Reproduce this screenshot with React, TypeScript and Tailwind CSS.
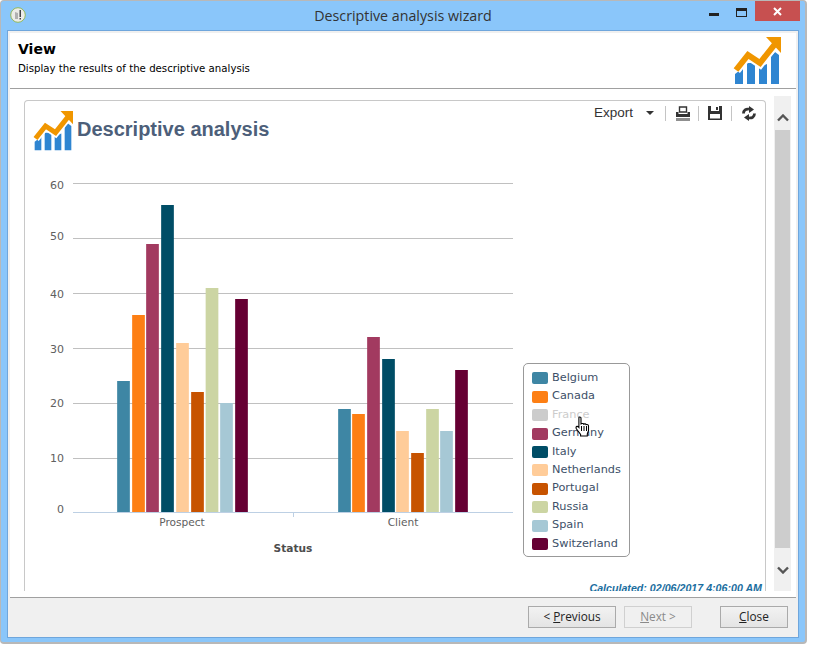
import React from "react";

const series = [
  { name: "Belgium", color: "#3e86a4", p: 24, c: 19 },
  { name: "Canada", color: "#fd7f14", p: 36, c: 18 },
  { name: "France", color: "#cccccc", p: null, c: null },
  { name: "Germany", color: "#a23a60", p: 49, c: 32 },
  { name: "Italy", color: "#004d66", p: 56, c: 28 },
  { name: "Netherlands", color: "#ffcc99", p: 31, c: 15 },
  { name: "Portugal", color: "#c75300", p: 22, c: 11 },
  { name: "Russia", color: "#ccd5a3", p: 41, c: 19 },
  { name: "Spain", color: "#a6c8d5", p: 20, c: 15 },
  { name: "Switzerland", color: "#660033", p: 39, c: 26 },
];
const visible = series.filter((s) => s.p !== null);
const px = [117, 132, 146, 161, 176, 191, 205.5, 220, 235];
const cx = [338, 352, 367, 382, 396, 411, 426, 440, 455];
const ticks = [
  { v: 60, line: 183, label: 189 },
  { v: 50, line: 238, label: 240 },
  { v: 40, line: 293, label: 298 },
  { v: 30, line: 348, label: 353 },
  { v: 20, line: 403, label: 407 },
  { v: 10, line: 458, label: 462 },
  { v: 0, line: 513, label: 513 },
];
const chartFont = "'DejaVu Sans', sans-serif";

function TrendIcon({ size }: { size: number }) {
  return (
    <svg width={size} height={size} viewBox="0 0 48 48" className="block shrink-0">
      <path d="M2 37l8-6v16H2z M14 26h8v21h-8z M26 30l8-3v20h-8z M38 19l4-4 4 3v29h-8z" fill="#2f85d1" />
      <path d="M3 33 15 18 27 26 42 7" fill="none" stroke="#ffffff" strokeWidth="10" />
      <path d="M3 33 15 18 27 26 42 7" fill="none" stroke="#f09600" strokeWidth="6" />
      <path d="M33 0h15v16z" fill="#f09600" />
    </svg>
  );
}

function Hand() {
  return (
    <svg width="16" height="21" viewBox="0 0 16 21" className="block">
      <path
        d="M4 1.2c1-.6 2 0 2 1.2V8l1-.4c.8-.3 1.5 0 1.7.6l.8-.3c.8-.2 1.4.2 1.6.8l.8-.2c1-.1 1.6.5 1.6 1.5v4.6l-1.2 3.2V20H5.6v-1.6L1.5 13c-.8-1.2-.6-2.4.4-2.6.7-.1 1.4.3 2 1V2.4z"
        fill="#ffffff"
        stroke="#000000"
        strokeWidth="1.1"
      />
      <path d="M6.5 10v5M9 10v5M11.5 10v5" stroke="#000000" strokeWidth="1" />
    </svg>
  );
}

function PrintIcon() {
  return (
    <svg width="14" height="15" viewBox="0 0 14 15" className="block">
      <path d="M3.5 1h7v5h-7z" fill="#ffffff" stroke="#333333" strokeWidth="1.4" />
      <path d="M0 6h2.5v2h9V6H14v5H0z" fill="#333333" />
      <path d="M0 12h14v3H0z" fill="#8f8f8f" />
    </svg>
  );
}

function SaveIcon() {
  return (
    <svg width="14" height="14" viewBox="0 0 14 14" className="block">
      <path d="M0 0h14v14H0z" fill="#333333" />
      <path d="M3 0h8v5H3z" fill="#ffffff" />
      <path d="M8 1h2v3H8z" fill="#333333" />
      <path d="M2 8h10v4.500H2z" fill="#ffffff" />
    </svg>
  );
}

function RefreshIcon() {
  return (
    <svg width="16" height="15" viewBox="0 0 16 15" className="block">
      <path d="M2.500 7.500C2.500 4.500 5 2.500 8 3.200" fill="none" stroke="#333333" strokeWidth="2.800" />
      <path d="M8 0l5 3.600-5 3.400z" fill="#333333" />
      <path d="M13.500 7.500C13.500 10.500 11 12.500 8 11.800" fill="none" stroke="#333333" strokeWidth="2.800" />
      <path d="M8 15l-5-3.600 5-3.400z" fill="#333333" />
    </svg>
  );
}

function AppIcon() {
  return (
    <svg width="16" height="16" viewBox="0 0 16 16" className="block">
      <circle cx="8" cy="8" r="7.300" fill="#ecece8" stroke="#93b95a" strokeWidth="1" />
      <path d="M5 5l3 1v6H5z" fill="#b0b0b0" />
      <path d="M9.500 3h1.500v7H9.500zM9.500 11h1.500v1.500H9.500z" fill="#444444" />
    </svg>
  );
}

function WizardButton({ children, disabled, className }: { children: React.ReactNode; disabled?: boolean; className: string }) {
  return (
    <div
      className={`h-[22px] flex items-center justify-center border text-[11.8px] font-['Open_Sans',sans-serif] ${
        disabled ? "border-[#d0d0d0] bg-[#f0f0f0] text-[#8a8a8a]" : "border-[#aaaaaa] bg-gradient-to-b from-[#f2f2f2] to-[#e4e4e4] text-[#222222]"
      } ${className}`}
    >
      {children}
    </div>
  );
}

export default function App() {
  return (
    <div className="w-[826px] h-[664px] bg-white">
      <div className="w-[807px] h-[644px] flex flex-col bg-[#8ac6fa] border border-[#b8b8b8] border-r-2 border-b-2 rounded-[4px] pl-[6px] pr-[6px] pb-[4px]">
        <div className="h-[29px] shrink-0 flex items-start -mr-[6px]">
          <div className="w-[94px] pl-[3px] pt-[6px]">
            <AppIcon />
          </div>
          <div className="flex-1 text-center text-[14.25px] leading-[30px] text-[#333333] font-['Open_Sans',sans-serif]">Descriptive analysis wizard</div>
          <div className="w-[100px] flex justify-end pr-[5px]">
            <div className="w-[10px] h-[3px] bg-[#222222] mt-[12px] mr-[17px]" />
            <div className="w-[11px] h-[9px] border border-t-[3px] border-[#222222] mt-[7px] mr-[8px]" />
            <div className="w-[45px] h-[20px] bg-[#c75050] flex items-center justify-center">
              <svg width="9" height="9" viewBox="0 0 9 9">
                <path d="M1 1l7 7M8 1L1 8" stroke="#ffffff" strokeWidth="2" />
              </svg>
            </div>
          </div>
        </div>

        <div className="flex-1 min-h-0 flex flex-col border border-[#6fa6dc] bg-[#f0f0f0] pt-[2px] px-[2px]">
          <div className="h-[56px] shrink-0 bg-white border-b border-[#a0a0a0] flex justify-between pl-[8px] pr-[15px]">
            <div>
              <div className="text-[14px] leading-[17px] mt-[8px] font-bold text-black font-['DejaVu_Sans',sans-serif]">View</div>
              <div className="text-[10.2px] leading-[14px] mt-[4px] text-black font-['DejaVu_Sans',sans-serif]">Display the results of the descriptive analysis</div>
            </div>
            <div className="pt-[4px]">
              <TrendIcon size={48} />
            </div>
          </div>

          <div className="flex-1 min-h-0 flex bg-white pl-[14px] pr-[5px] pt-[7px] pb-[6px]">
            <div className="relative mt-[4px] w-[742px] border-t border-x border-[#c8c8c8] rounded-t-[4px] overflow-hidden">
              <div className="absolute top-0 right-0 h-[24px] flex items-center text-[#333333]">
                <span className="text-[13.5px] font-['Liberation_Sans',sans-serif] mr-[13px]">Export</span>
                <svg width="8" height="4" viewBox="0 0 8 4" className="mr-[11px]">
                  <path d="M0 0h8L4 4z" fill="#333333" />
                </svg>
                <div className="w-px h-[15px] bg-[#c4c4c4] mr-[10px]" />
                <PrintIcon />
                <div className="w-px h-[15px] bg-[#c4c4c4] ml-[8px] mr-[9px]" />
                <SaveIcon />
                <div className="w-px h-[15px] bg-[#c4c4c4] mx-[9px]" />
                <div className="mr-[8px]">
                  <RefreshIcon />
                </div>
              </div>

              <div className="flex items-center gap-[4px] pl-[8px] pt-[10px]">
                <TrendIcon size={40} />
                <div className="text-[20px] font-bold text-[#4d5f7a] font-['Liberation_Sans',sans-serif] -mt-[4px]">Descriptive analysis</div>
              </div>

              <svg width="740" height="439" viewBox="25 151 740 439" className="block">
                {ticks.filter((t) => t.v > 0).map((t) => (
                  <line key={t.v} x1="73" x2="513" y1={t.line + 0.5} y2={t.line + 0.5} stroke="#c0c0c0" />
                ))}
                <line x1="73" x2="513" y1="512.5" y2="512.5" stroke="#bdd0e4" />
                <line x1="293.5" x2="293.5" y1="513" y2="517" stroke="#bdd0e4" />
                {ticks.map((t) => (
                  <text key={t.v} x="64" y={t.label} textAnchor="end" fontSize="11" fill="#606060" fontFamily={chartFont}>
                    {t.v}
                  </text>
                ))}
                {visible.map((s, i) => {
                  const pt = Math.round(513 - (s.p as number) * 5.5);
                  const ct = Math.round(513 - (s.c as number) * 5.5);
                  return (
                    <g key={s.name} fill={s.color}>
                      <rect x={px[i]} y={pt} width="13" height={512 - pt} fillOpacity="0.7" />
                      <rect x={px[i] + 0.5} y={pt} width="12" height={512 - pt} />
                      <rect x={cx[i]} y={ct} width="13" height={512 - ct} fillOpacity="0.7" />
                      <rect x={cx[i] + 0.5} y={ct} width="12" height={512 - ct} />
                    </g>
                  );
                })}
                <text x="182" y="526" textAnchor="middle" fontSize="10.6" fill="#606060" fontFamily={chartFont}>Prospect</text>
                <text x="403" y="526" textAnchor="middle" fontSize="10.6" fill="#606060" fontFamily={chartFont}>Client</text>
                <text x="293" y="552" textAnchor="middle" fontSize="10.6" fontWeight="bold" fill="#4d4d4d" fontFamily={chartFont}>Status</text>
              </svg>

              <div className="absolute left-[498px] top-[262px] w-[107px] h-[194px] border border-[#999999] rounded-[5px] bg-white pt-[5px] pl-[8px]">
                {series.map((s) => (
                  <div key={s.name} className="h-[18.44px] flex items-center">
                    <div className="w-[16px] h-[12px] rounded-[2px] mr-[4px]" style={{ backgroundColor: s.color }} />
                    <span className={`text-[11.3px] font-['DejaVu_Sans',sans-serif] ${s.p === null ? "text-[#cccccc]" : "text-[#3d5068]"}`}>{s.name}</span>
                  </div>
                ))}
              </div>
              <div className="absolute left-[550px] top-[315px]">
                <Hand />
              </div>

              <div className="absolute right-[3px] bottom-[-3px] text-[10.67px] leading-[12px] italic font-bold text-[#1b6ea0] font-['Liberation_Sans',sans-serif]">
                Calculated: 02/06/2017 4:06:00 AM
              </div>
            </div>

            <div className="ml-[8px] w-[17px] bg-[#f0f0f0] flex flex-col items-center">
              <div className="h-[34px] w-full flex items-center justify-center pt-[10px]">
                <svg width="12" height="8" viewBox="0 0 12 8">
                  <path d="M1 6.5l5-5 5 5" fill="none" stroke="#555555" strokeWidth="2.4" />
                </svg>
              </div>
              <div className="flex-1 w-[15px] bg-[#cdcdcd]" />
              <div className="h-[43px] w-full flex items-center justify-center">
                <svg width="12" height="8" viewBox="0 0 12 8">
                  <path d="M1 1.5l5 5 5-5" fill="none" stroke="#555555" strokeWidth="2.4" />
                </svg>
              </div>
            </div>
          </div>

          <div className="h-[40px] shrink-0 bg-[#f0f0f0] border-t border-[#a0a0a0] flex items-start pt-[8px] pl-[518px]">
            <WizardButton className="w-[88px]">
              <span>&lt; <u>P</u>revious</span>
            </WizardButton>
            <WizardButton disabled className="w-[68px] ml-[8px]">
              <span><u>N</u>ext &gt;</span>
            </WizardButton>
            <WizardButton className="w-[68px] ml-[28px]">
              <span><u>C</u>lose</span>
            </WizardButton>
          </div>
        </div>
      </div>
    </div>
  );
}
